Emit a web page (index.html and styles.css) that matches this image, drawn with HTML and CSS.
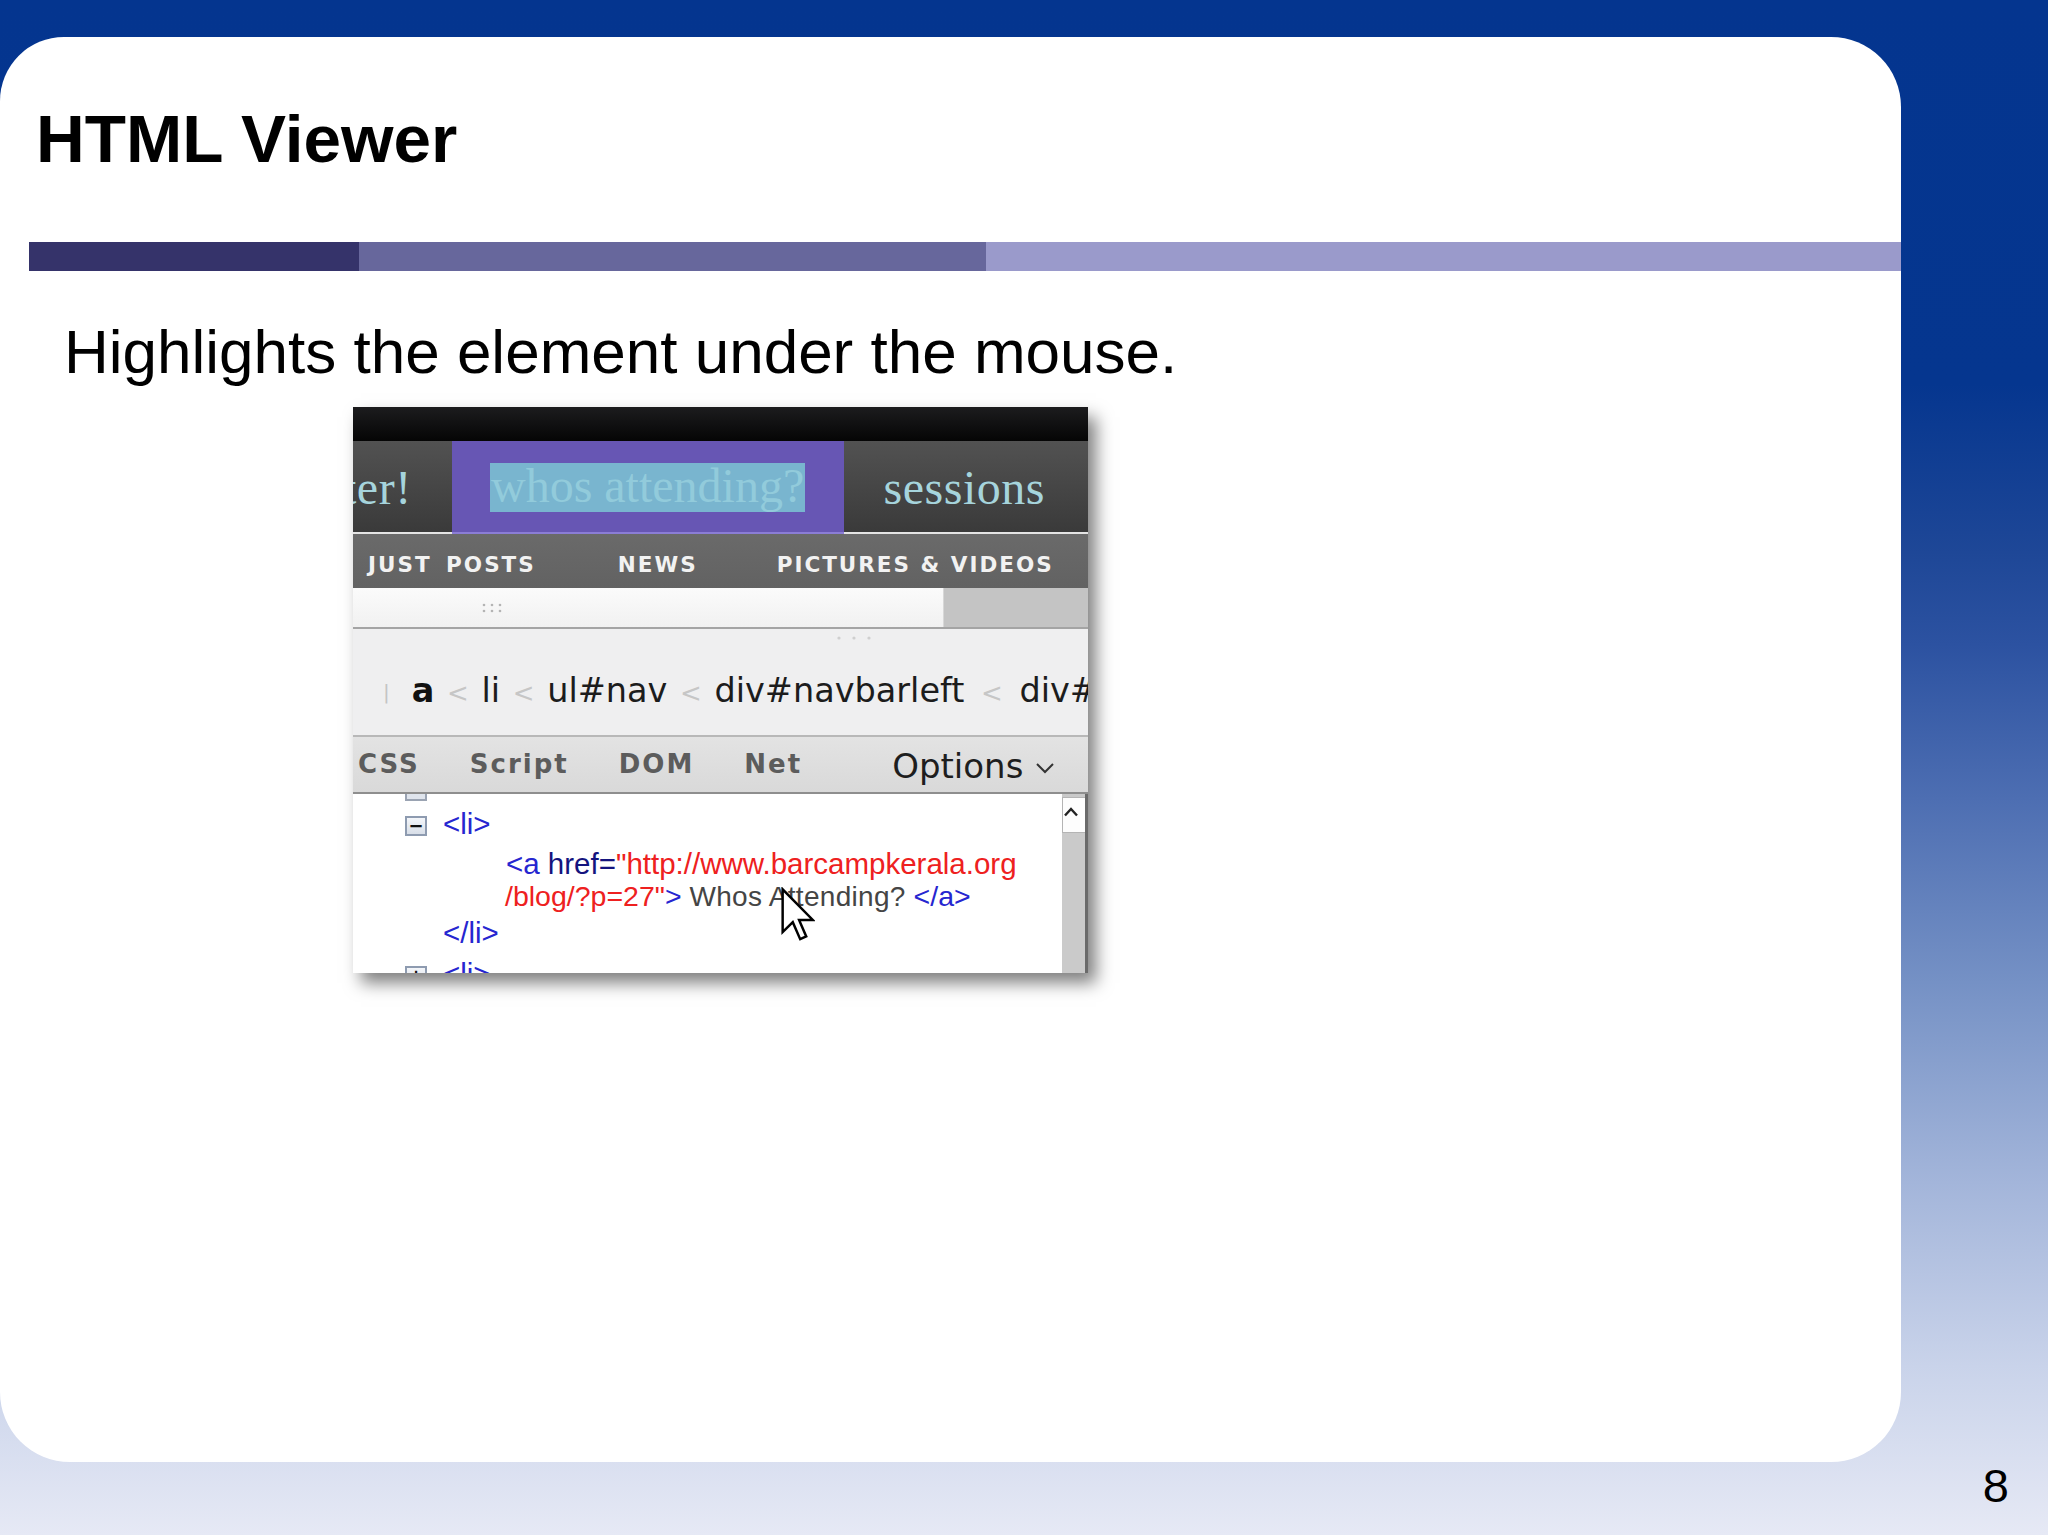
FILE: index.html
```html
<!DOCTYPE html>
<html>
<head>
<meta charset="utf-8">
<title>HTML Viewer</title>
<link rel="stylesheet" href="styles.css">
</head>
<body>
<div class="slide">
  <div class="card">
    <h1 class="title">HTML Viewer</h1>
    <div class="rule">
      <div class="seg seg1"></div>
      <div class="seg seg2"></div>
      <div class="seg seg3"></div>
    </div>
    <p class="lead">Highlights the element under the mouse.</p>
    <div class="shot">
      <div class="blackbar"></div>
      <div class="nav">
        <span class="nav-item nav-cut">ter!</span>
        <span class="nav-tab"><span class="hl">whos attending?</span></span>
        <span class="nav-item">sessions</span>
      </div>
      <div class="subnav">
        <span class="sub-a">JUST POSTS</span>
        <span class="sub-b">NEWS</span>
        <span class="sub-c">PICTURES &amp; VIDEOS</span>
      </div>
      <div class="gripbar">
        <div class="grip-left">
          <svg class="grip6" width="22" height="12" viewBox="0 0 22 12"><g fill="#b4b4b4"><circle cx="3" cy="3" r="1.3"/><circle cx="11" cy="3" r="1.3"/><circle cx="19" cy="3" r="1.3"/><circle cx="3" cy="9" r="1.3"/><circle cx="11" cy="9" r="1.3"/><circle cx="19" cy="9" r="1.3"/></g></svg>
        </div>
        <div class="grip-right"></div>
      </div>
      <div class="crumbs">
        <div class="crumb-grip">
          <svg width="40" height="6" viewBox="0 0 40 6"><g fill="#cfcfcf"><circle cx="4" cy="3" r="1.6"/><circle cx="19" cy="3" r="1.6"/><circle cx="34" cy="3" r="1.6"/></g></svg>
        </div>
        <div class="crumb-line"><span class="bar-mark">|</span><b>a</b> <span class="lt">&lt;</span> li <span class="lt">&lt;</span> ul#nav <span class="lt">&lt;</span> div#navbarleft <span class="lt lt-last">&lt;</span> div#navbarwrap</div>
      </div>
      <div class="tabs">
        <span class="tab">CSS</span>
        <span class="tab">Script</span>
        <span class="tab">DOM</span>
        <span class="tab">Net</span>
        <span class="options">Options <svg class="chev" width="20" height="12" viewBox="0 0 20 12"><path d="M2 2 L10 10 L18 2" fill="none" stroke="#333" stroke-width="2"/></svg></span>
      </div>
      <div class="content">
        <div class="tree">
          <div class="box-partial"></div>
          <div class="row row1"><span class="exp">&minus;</span><span class="tag">&lt;li&gt;</span></div>
          <div class="row row2"><span class="tag">&lt;a</span> <span class="attr">href=</span><span class="val">"http://www.barcampkerala.org</span></div>
          <div class="row row3"><span class="val">/blog/?p=27"</span><span class="tag">&gt;</span> <span class="txt">Whos Attending?</span> <span class="tag">&lt;/a&gt;</span></div>
          <div class="row row4"><span class="tag">&lt;/li&gt;</span></div>
          <div class="row row5"><span class="exp">+</span><span class="tag">&lt;li&gt;</span></div>
        </div>
        <div class="scroll">
          <div class="scroll-up"><svg width="16" height="12" viewBox="0 0 16 12"><path d="M2 9.5 L8 3 L14 9.5" fill="none" stroke="#222" stroke-width="2.4"/></svg></div>
          <div class="scroll-track"></div>
        </div>
      </div>
      <svg class="cursor" width="34" height="55" viewBox="0 0 12.4 19.6"><path d="M0.6 0.6 L0.6 16.2 L4.3 12.6 L7 18.8 L9.2 17.8 L6.6 11.8 L11.6 11.8 Z" fill="#fff" stroke="#000" stroke-width="0.9" stroke-linejoin="miter"/></svg>
    </div>
  </div>
  <div class="footer"><span class="pageno">8</span></div>
</div>
</body>
</html>
```
FILE: styles.css
```css
html, body {
  margin: 0;
  padding: 0;
}
body {
  width: 2048px;
  height: 1535px;
  overflow: hidden;
  background: linear-gradient(to bottom,
    #04358f 0%, #05368f 25%, #1e4797 36%, #2c52a1 42%, #4d6eb2 52%,
    #7591c5 64%, #a3b5da 77%, #c9d3ea 89%, #e6e9f5 100%);
  font-family: "Liberation Sans", Arial, sans-serif;
}
.slide {
  padding-top: 37px;
}
.card {
  width: 1901px;
  height: 1425px;
  background: #fff;
  border-radius: 64px 70px 70px 70px;
  display: flex;
  flex-direction: column;
  overflow: hidden;
}
.title {
  margin: 68px 0 0 36px;
  font-family: "Liberation Sans", Arial, sans-serif;
  font-weight: bold;
  font-size: 67.5px;
  line-height: 67px;
  color: #000;
}
.rule {
  margin: 70px 0 0 29px;
  height: 29px;
  display: flex;
}
.seg1 { width: 330px; background: #35336a; }
.seg2 { width: 627px; background: #67679c; }
.seg3 { flex: 1; background: #9a9acb; }
.lead {
  margin: 50px 0 0 64px;
  font-size: 62px;
  line-height: 62px;
  color: #000;
}
.shot {
  position: relative;
  margin: 24px 0 0 353px;
  width: 735px;
  height: 566px;
  overflow: hidden;
  box-shadow: 8px 10px 16px rgba(0, 0, 0, 0.5);
  display: flex;
  flex-direction: column;
  background: #fff;
}
.blackbar {
  height: 34px;
  background: linear-gradient(#1c1c1e, #050505);
}
.nav {
  height: 91px;
  border-bottom: 2px solid #e4e4e4;
  background: linear-gradient(#525252, #3a3a3a);
  display: flex;
  align-items: stretch;
  font-family: "Liberation Serif", "Times New Roman", serif;
  font-size: 48px;
  color: #a6d4dc;
  white-space: nowrap;
}
.nav-item {
  align-self: center;
  line-height: 60px;
  padding-top: 2px;
  letter-spacing: 0.5px;
}
.nav-cut {
  margin-left: -10px;
  margin-right: 40px;
}
.nav-tab {
  width: 392px;
  box-sizing: border-box;
  margin-bottom: -2px;
  margin-right: 40px;
  border-bottom: 2px solid #8b7dd6;
  background: #6756b4;
  display: flex;
  align-items: center;
  justify-content: center;
  padding-top: 2px;
}
.hl {
  display: inline-block;
  height: 49px;
  line-height: 45px;
  width: 315px;
  text-align: center;
  background: #79b5cf;
  color: #92cbdb;
}
.subnav {
  height: 54px;
  background: linear-gradient(#6a6a6a, #626262);
  display: flex;
  align-items: center;
  padding-left: 15px;
  padding-top: 6px;
  box-sizing: border-box;
  font-family: "DejaVu Sans", Verdana, sans-serif;
  font-weight: bold;
  font-size: 21.5px;
  letter-spacing: 2px;
  color: #f2f2f2;
  white-space: nowrap;
}
.sub-a {
  word-spacing: 5px;
}
.sub-b {
  margin-left: 82px;
}
.sub-c {
  margin-left: 79px;
}
.gripbar {
  height: 39px;
  border-bottom: 2px solid #a4a4a4;
  display: flex;
}
.grip-left {
  width: 590px;
  background: linear-gradient(#fbfbfb, #f1f1f1);
  border-right: 1px solid #d8d8d8;
  display: flex;
  align-items: center;
}
.grip6 {
  margin-left: 128px;
}
.grip-right {
  flex: 1;
  background: #c4c4c4;
}
.crumbs {
  height: 106px;
  background: #efeff0;
  display: flex;
  flex-direction: column;
}
.crumb-grip {
  height: 17px;
  display: flex;
  align-items: center;
  padding-left: 482px;
}
.crumb-line {
  height: 89px;
  line-height: 89px;
  padding-left: 30px;
  font-family: "DejaVu Sans", Verdana, sans-serif;
  font-size: 33.5px;
  color: #1c1c1c;
  white-space: nowrap;
}
.crumb-line b {
  font-weight: bold;
  color: #111;
}
.bar-mark {
  font-size: 20px;
  color: #c4c4c4;
  margin-right: 22px;
  position: relative;
  top: -3px;
}
.lt {
  font-size: 26px;
  color: #c6c6c6;
  margin: 0 2px;
}
.lt-last {
  margin: 0 6px;
}
.tabs {
  height: 55px;
  border-top: 2px solid #b8b8b8;
  border-bottom: 2px solid #8e8e8e;
  background: linear-gradient(#e3e3e3, #d9d9d9);
  display: flex;
  align-items: center;
  gap: 50px;
  padding-left: 5px;
  white-space: nowrap;
}
.tab {
  font-family: "DejaVu Sans", Verdana, sans-serif;
  font-weight: bold;
  font-size: 26px;
  letter-spacing: 2px;
  line-height: 55px;
  color: #5c5c5c;
}
.options {
  margin-left: 40px;
  font-family: "DejaVu Sans", Verdana, sans-serif;
  font-size: 34px;
  line-height: 55px;
  color: #1e1e1e;
  display: flex;
  align-items: center;
  padding-top: 4px;
}
.chev {
  margin-left: 12px;
  margin-top: 2px;
}
.content {
  height: 179px;
  display: flex;
  background: #fff;
}
.tree {
  flex: 1;
  font-family: "Liberation Sans", Arial, sans-serif;
  font-size: 29.5px;
  white-space: nowrap;
}
.box-partial {
  height: 5px;
  width: 18px;
  margin-left: 52px;
  border: 2px solid #9aa3b2;
  border-top: none;
  background: #dfe4ec;
}
.row {
  padding-left: 90px;
}
.row1 {
  line-height: 46px;
}
.row2 {
  line-height: 33px;
  padding-left: 153px;
}
.row3 {
  line-height: 33px;
  padding-left: 152px;
  font-size: 28.5px;
}
.row4 {
  line-height: 40px;
}
.row5 {
  line-height: 41px;
}
.exp {
  display: inline-block;
  box-sizing: border-box;
  width: 22px;
  height: 20px;
  margin-left: -38px;
  margin-right: 16px;
  border: 2px solid #8e9bb0;
  background: linear-gradient(#f4f6fa, #d8dee8);
  font-family: "DejaVu Sans", sans-serif;
  font-size: 18px;
  font-weight: bold;
  line-height: 15px;
  text-align: center;
  color: #111;
  vertical-align: middle;
}
.tag { color: #2626d0; }
.attr { color: #14147e; }
.val { color: #ee2020; }
.txt { color: #454545; font-size: 28px; letter-spacing: 0.3px; }
.scroll {
  width: 23px;
  display: flex;
  flex-direction: column;
  border-right: 3px solid #6a6a6a;
  background: #c9c9c9;
}
.scroll-up {
  margin-top: 3px;
  height: 36px;
  background: #fdfdfd;
  border: 1px solid #b4b4b4;
  border-right: none;
  display: flex;
  align-items: flex-start;
  padding-top: 8px;
  box-sizing: border-box;
}
.scroll-track {
  flex: 1;
  background: #cacaca;
}
.cursor {
  position: absolute;
  left: 428px;
  top: 480px;
}
.footer {
  height: 73px;
  display: flex;
  justify-content: flex-end;
  padding-right: 39px;
}
.pageno {
  font-family: "Liberation Sans", Arial, sans-serif;
  font-size: 47px;
  line-height: 47px;
  color: #000;
}
```
